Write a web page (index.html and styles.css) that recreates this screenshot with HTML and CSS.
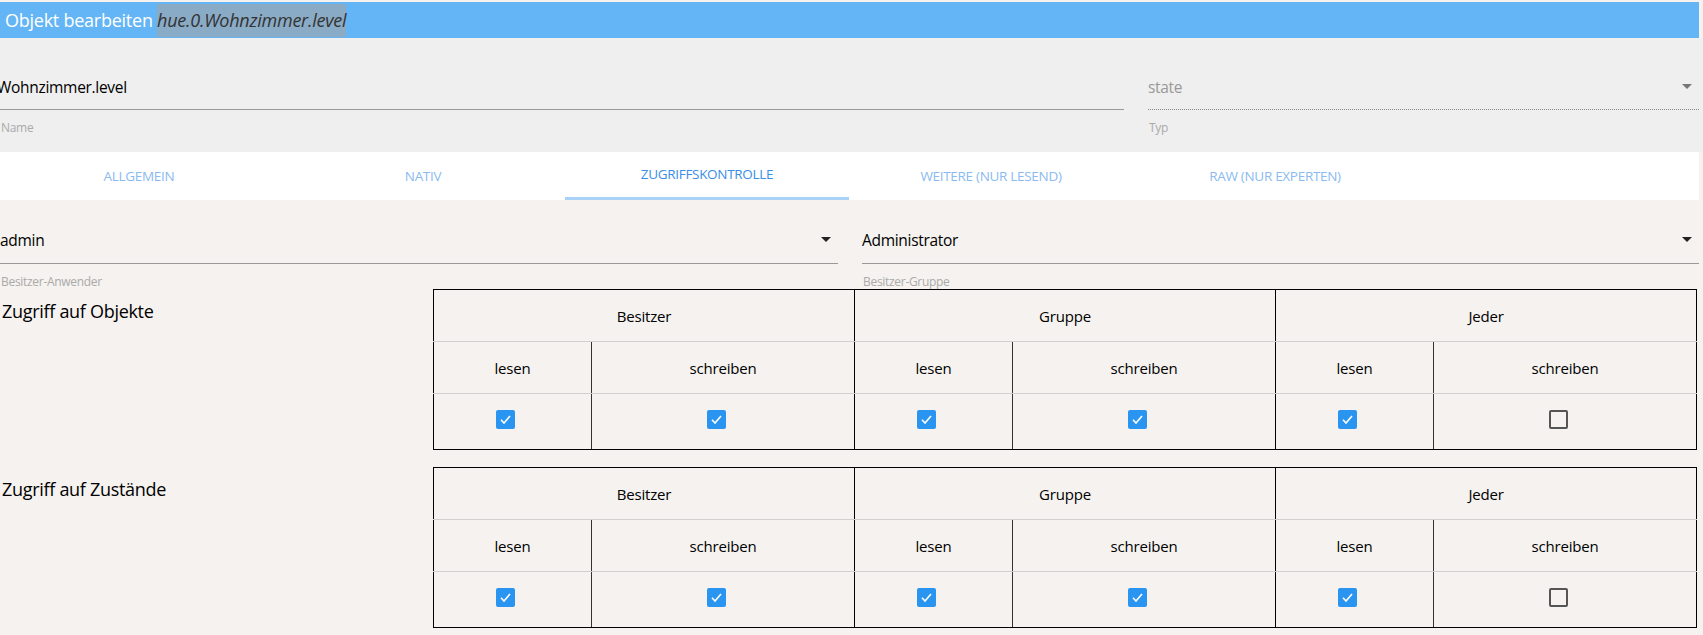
FILE: index.html
```html
<!DOCTYPE html>
<html lang="de">
<head>
<meta charset="utf-8">
<title>Objekt bearbeiten</title>
<link rel="stylesheet" href="styles.css">
</head>
<body>
<div class="page">
  <div class="titlebar"><span class="title-static">Objekt bearbeiten </span><span class="title-id">hue.0.Wohnzimmer.level</span></div>

  <div class="topfields">
    <div class="field field-name">
      <div class="input"><span class="value shifted">Wohnzimmer.level</span></div>
      <div class="helper">Name</div>
    </div>
    <div class="field field-type">
      <div class="input dotted"><span class="value disabled">state</span><span class="arrow arrow-gray"></span></div>
      <div class="helper">Typ</div>
    </div>
  </div>

  <div class="tabs">
    <div class="tab">Allgemein</div>
    <div class="tab">Nativ</div>
    <div class="tab active">Zugriffskontrolle</div>
    <div class="tab">Weitere (nur lesend)</div>
    <div class="tab">Raw (nur Experten)</div>
  </div>

  <div class="owner">
    <div class="field field-user">
      <div class="input"><span class="value">admin</span><span class="arrow"></span></div>
      <div class="helper">Besitzer-Anwender</div>
    </div>
    <div class="field field-group">
      <div class="input"><span class="value">Administrator</span><span class="arrow"></span></div>
      <div class="helper">Besitzer-Gruppe</div>
    </div>
  </div>

  <div class="section">
    <div class="section-label">Zugriff auf Objekte</div>
    <table class="acl">
      <colgroup><col class="c-r"><col class="c-w"><col class="c-r"><col class="c-w"><col class="c-r"><col class="c-w"></colgroup>
      <tr class="r-head"><td colspan="2" class="grp">Besitzer</td><td colspan="2" class="grp">Gruppe</td><td colspan="2" class="grp">Jeder</td></tr>
      <tr class="r-sub"><td class="sub">lesen</td><td class="grp">schreiben</td><td class="sub">lesen</td><td class="grp">schreiben</td><td class="sub">lesen</td><td class="grp">schreiben</td></tr>
      <tr class="r-chk">
        <td class="sub"><span class="cb on"><svg viewBox="0 0 19 19"><path d="M5 9.8l3 3.2 6-7" /></svg></span></td>
        <td class="grp"><span class="cb on"><svg viewBox="0 0 19 19"><path d="M5 9.8l3 3.2 6-7" /></svg></span></td>
        <td class="sub"><span class="cb on"><svg viewBox="0 0 19 19"><path d="M5 9.8l3 3.2 6-7" /></svg></span></td>
        <td class="grp"><span class="cb on"><svg viewBox="0 0 19 19"><path d="M5 9.8l3 3.2 6-7" /></svg></span></td>
        <td class="sub"><span class="cb on"><svg viewBox="0 0 19 19"><path d="M5 9.8l3 3.2 6-7" /></svg></span></td>
        <td class="grp"><span class="cb off"></span></td>
      </tr>
    </table>
  </div>

  <div class="section second">
    <div class="section-label">Zugriff auf Zustände</div>
    <table class="acl">
      <colgroup><col class="c-r"><col class="c-w"><col class="c-r"><col class="c-w"><col class="c-r"><col class="c-w"></colgroup>
      <tr class="r-head"><td colspan="2" class="grp">Besitzer</td><td colspan="2" class="grp">Gruppe</td><td colspan="2" class="grp">Jeder</td></tr>
      <tr class="r-sub"><td class="sub">lesen</td><td class="grp">schreiben</td><td class="sub">lesen</td><td class="grp">schreiben</td><td class="sub">lesen</td><td class="grp">schreiben</td></tr>
      <tr class="r-chk">
        <td class="sub"><span class="cb on"><svg viewBox="0 0 19 19"><path d="M5 9.8l3 3.2 6-7" /></svg></span></td>
        <td class="grp"><span class="cb on"><svg viewBox="0 0 19 19"><path d="M5 9.8l3 3.2 6-7" /></svg></span></td>
        <td class="sub"><span class="cb on"><svg viewBox="0 0 19 19"><path d="M5 9.8l3 3.2 6-7" /></svg></span></td>
        <td class="grp"><span class="cb on"><svg viewBox="0 0 19 19"><path d="M5 9.8l3 3.2 6-7" /></svg></span></td>
        <td class="sub"><span class="cb on"><svg viewBox="0 0 19 19"><path d="M5 9.8l3 3.2 6-7" /></svg></span></td>
        <td class="grp"><span class="cb off"></span></td>
      </tr>
    </table>
  </div>
</div>
</body>
</html>
```

FILE: styles.css
```css
* { box-sizing: border-box; }
html, body { margin: 0; padding: 0; }
body {
  background: #f5f2ef;
  font-family: "Open Sans", "Noto Sans", sans-serif;
  color: #000;
  width: 1703px;
  height: 635px;
  overflow: hidden;
}
.page { width: 1703px; }

.titlebar {
  margin-top: 2px;
  width: 1699px;
  height: 36px;
  background: #64b5f6;
  color: #fff;
  font-size: 18px;
  line-height: 36px;
  padding-left: 5px;
  white-space: nowrap;
  letter-spacing: -0.25px;
}
.title-id {
  background: #8aabc6;
  color: #333;
  font-style: italic;
  padding: 4px 0 5px;
}

.topfields {
  background: #efefef;
  display: flex;
  gap: 24px;
  padding: 26px 4px 17px 0;
}
.field { display: flex; flex-direction: column; }
.field-name { width: 1124px; }
.field-type { width: 551px; }

.input {
  height: 46px;
  border-bottom: 1px solid #999;
  display: flex;
  align-items: center;
  justify-content: space-between;
  font-size: 15.5px;
  overflow: hidden;
  white-space: nowrap;
}
.input.dotted { border-bottom: 1px dotted #888; }
.value { letter-spacing: -0.3px; }
.value.shifted { margin-left: -3px; }
.value.disabled { color: #999; }

.arrow {
  width: 0; height: 0;
  border-left: 5px solid transparent;
  border-right: 5px solid transparent;
  border-top: 5px solid #222;
  margin-right: 7px;
}
.arrow-gray { border-top-color: #777; }

.helper {
  margin-top: 11px;
  font-size: 12px;
  line-height: 14px;
  color: #aaa;
  letter-spacing: -0.3px;
  padding-left: 1px;
}

.tabs {
  width: 1699px;
  height: 48px;
  background: #fff;
  display: flex;
}
.tabs .tab:first-child { margin-left: -3px; }
.tab {
  width: 284px;
  height: 48px;
  text-align: center;
  text-transform: uppercase;
  font-size: 13.5px;
  line-height: 48px;
  color: #8bbaf0;
  letter-spacing: -0.3px;
}
.tab.active {
  color: #3a8ee6;
  border-bottom: 3px solid #a9d3f6;
  line-height: 45px;
}

.owner {
  display: flex;
  gap: 24px;
  padding: 16px 4px 0 0;
}
.owner .input { height: 48px; }
.field-user { width: 838px; }
.field-group { width: 837px; }

.section {
  display: flex;
  align-items: flex-start;
}
.section.second { margin-top: 17px; }
.section-label {
  width: 433px;
  flex: none;
  font-size: 18px;
  padding-top: 10px;
  padding-left: 2px;
  letter-spacing: -0.3px;
}

.acl {
  width: 1264px;
  border-collapse: collapse;
  border: 1px solid #000;
  table-layout: fixed;
  font-size: 15px;
  letter-spacing: -0.2px;
}
.c-r { width: 158px; }
.c-w { width: 263px; }
.acl td {
  text-align: center;
  padding: 0;
  border-bottom: 1px solid #d0d0d0;
}
.acl td.grp { border-right: 1px solid #000; }
.acl td.sub { border-right: 1px solid #333; }
.r-head td { height: 52px; }
.r-sub td { height: 52px; }
.r-chk td { height: 56px; border-bottom: 1px solid #000; }

.cb {
  display: inline-block;
  width: 19px;
  height: 19px;
  border-radius: 2px;
  vertical-align: middle;
  margin-right: 14px;
  margin-bottom: 4px;
}
.cb.on { background: #2a95f0; }
.cb.on svg { display: block; width: 19px; height: 19px; }
.cb.on path { fill: none; stroke: #fff; stroke-width: 1.6; }
.cb.off { border: 2px solid #555; }
```
